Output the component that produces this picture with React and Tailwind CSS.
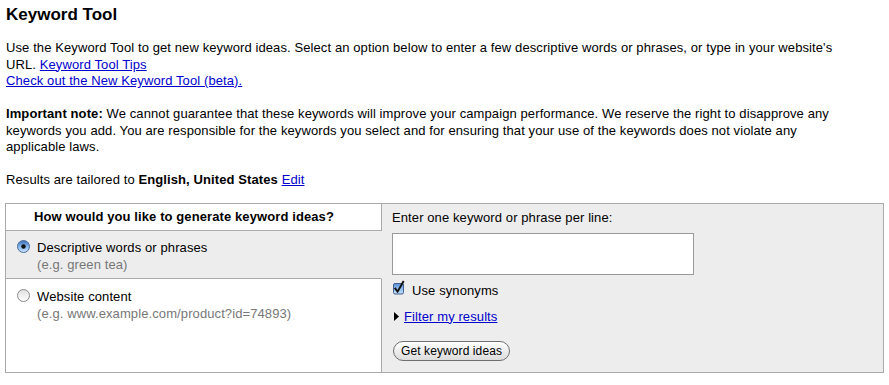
import React from "react";

function RadioOn() {
  return (
    <svg width="13" height="13" viewBox="0 0 13 13" className="shrink-0">
      <defs>
        <linearGradient id="rb" x1="0" y1="0" x2="0" y2="1">
          <stop offset="0" stopColor="#3b6fb8" />
          <stop offset="0.5" stopColor="#86b5ec" />
          <stop offset="1" stopColor="#cfe6ff" />
        </linearGradient>
      </defs>
      <circle cx="6.5" cy="6.5" r="6" fill="url(#rb)" stroke="#4a6c9a" strokeWidth="1" />
      <circle cx="6.5" cy="6.5" r="2.2" fill="#111" />
    </svg>
  );
}

function RadioOff() {
  return (
    <svg width="13" height="13" viewBox="0 0 13 13" className="shrink-0">
      <defs>
        <linearGradient id="rw" x1="0" y1="0" x2="0" y2="1">
          <stop offset="0" stopColor="#e0e0e0" />
          <stop offset="1" stopColor="#ffffff" />
        </linearGradient>
      </defs>
      <circle cx="6.5" cy="6.5" r="6" fill="url(#rw)" stroke="#8a8a8a" strokeWidth="1" />
    </svg>
  );
}

function CheckOn() {
  return (
    <svg width="12" height="12" viewBox="0 0 12 12" className="shrink-0 overflow-visible">
      <defs>
        <linearGradient id="cb" x1="0" y1="0" x2="0" y2="1">
          <stop offset="0" stopColor="#5a8fd6" />
          <stop offset="0.5" stopColor="#8fbdf0" />
          <stop offset="1" stopColor="#c6e0fb" />
        </linearGradient>
      </defs>
      <rect x="0.5" y="0.5" width="10" height="10.5" rx="1.5" fill="url(#cb)" stroke="#3f5f8f" strokeWidth="1" />
      <path d="M2.3 5.6 L4.6 8.6 L10.2 -1.2" fill="none" stroke="#111" strokeWidth="1.9" strokeLinecap="square" />
    </svg>
  );
}

export default function App() {
  return (
    <div className="min-h-[385px] bg-white px-[5px] pt-[5px] font-['Liberation_Sans',Arial,sans-serif] text-[13px] tracking-[0.1px] text-black">
      <h1 className="m-0 pl-[1px] text-[17px] font-bold leading-[20px] tracking-normal">Keyword Tool</h1>

      <div className="mt-[15px] max-w-[842px] pl-[1px] leading-[16.5px]">
        <p>
          Use the Keyword Tool to get new keyword ideas. Select an option below to enter a few descriptive words or
          phrases, or type in your website's URL.{" "}
          <a href="#" className="text-[#0000cc] underline">Keyword Tool Tips</a>
          <br />
          <a href="#" className="text-[#0000cc] underline">Check out the New Keyword Tool (beta).</a>
        </p>
        <p className="mt-[16.5px]">
          <span className="font-bold">Important note:</span> We cannot guarantee that these keywords will improve your
          campaign performance. We reserve the right to disapprove any keywords you add. You are responsible for the
          keywords you select and for ensuring that your use of the keywords does not violate any applicable laws.
        </p>
        <p className="mt-[16.5px]">
          Results are tailored to <span className="font-bold">English, United States</span>{" "}
          <a href="#" className="text-[#0000cc] underline">Edit</a>
        </p>
      </div>

      <div className="mt-[14px] flex w-[879px] border border-[#aaaaaa]">
        <div className="flex w-[376px] shrink-0 flex-col">
          <div className="flex h-[27px] items-center border-r border-b border-[#aaaaaa] bg-white pl-[28px] font-bold leading-[17px]">
            How would you like to generate keyword ideas?
          </div>
          <div className="flex h-[48px] gap-[7px] border-b border-r border-b-[#aaaaaa] border-r-transparent bg-[#ededed] pl-[11px] pt-[8px] leading-[17px]">
            <div className="pt-[1px]">
              <RadioOn />
            </div>
            <div>
              <div>Descriptive words or phrases</div>
              <div className="text-[#777777]">(e.g. green tea)</div>
            </div>
          </div>
          <div className="flex h-[93px] gap-[7px] border-r border-[#aaaaaa] bg-white pl-[11px] pt-[9px] leading-[17px]">
            <div className="pt-[1px]">
              <RadioOff />
            </div>
            <div>
              <div>Website content</div>
              <div className="text-[#777777]">(e.g. www.example.com/product?id=74893)</div>
            </div>
          </div>
        </div>

        <div className="flex flex-1 flex-col items-start bg-[#ededed] pl-[10px] pt-[5px] leading-[17px]">
          <div>Enter one keyword or phrase per line:</div>
          <textarea className="mt-[7px] block h-[42px] w-[302px] resize-none border border-[#9a9a9a] bg-white" />
          <div className="mt-[7px] flex items-start gap-[7px] pl-[1px]">
            <div className="pt-[1px]">
              <CheckOn />
            </div>
            <span>Use synonyms</span>
          </div>
          <div className="mt-[9px] flex items-center pl-[2px]">
            <svg width="6" height="9" viewBox="0 0 6 9" className="mr-[4px]">
              <path d="M0 0 L5 4.5 L0 9 Z" fill="#000" />
            </svg>
            <a href="#" className="text-[#0000cc] underline">Filter my results</a>
          </div>
          <button className="ml-[1px] mt-[16px] flex h-[20px] w-[117px] items-center justify-center rounded-full border border-[#6f6f6f] bg-linear-to-b from-white to-[#dcdcdc] text-[12px] leading-[14px] text-black">
            Get keyword ideas
          </button>
        </div>
      </div>
    </div>
  );
}
